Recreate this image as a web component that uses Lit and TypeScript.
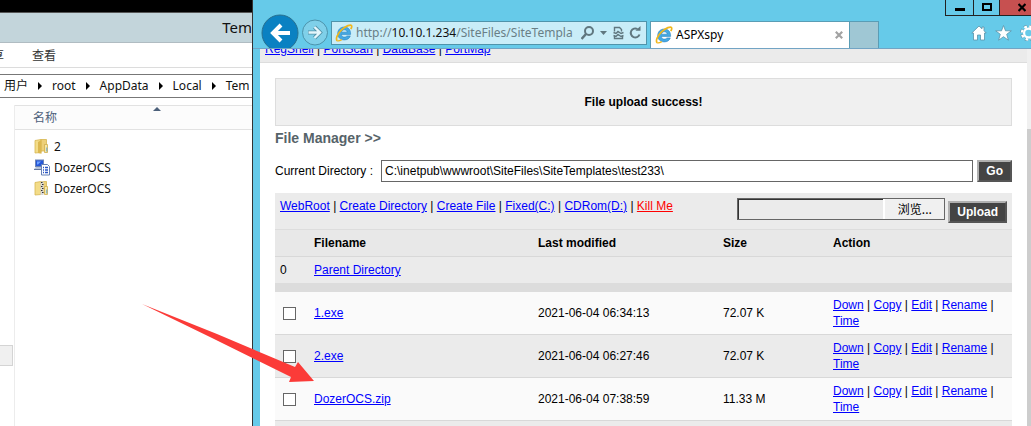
import { LitElement, html, css, svg } from "lit";
import { customElement } from "lit/decorators.js";

const ieLogo = () => html`<svg class="ie" width="18" height="18" viewBox="0 0 18 18" aria-hidden="true">
  <path d="M15.600 10.400H6.400c.2 1.700 1.300 2.700 3 2.700 1.200 0 2-.4 2.500-1.200h3.400c-.8 2.500-3 4-6 4-3.900 0-6.600-2.500-6.600-6.300C2.700 5.700 5.500 3 9.300 3c4 0 6.500 2.800 6.300 7.400zM6.500 8.200h5.700C12 6.700 11 5.800 9.400 5.800S6.800 6.700 6.500 8.200z" fill="#45a9e2" stroke="#2a83c2" stroke-width=".6"/>
  <path d="M2.300 16.700C.2 15.300 2.400 9.600 6.800 5.600 11 1.800 15.600.200 16.500 1.600c.5.900.1 2.200-.7 3.600" fill="none" stroke="#f0b71c" stroke-width="1.700"/>
  <path d="M2.300 16.700c1 .5 2.700-.1 4.500-1.100" fill="none" stroke="#f0b71c" stroke-width="1.500"/>
</svg>`;

const folderBack = svg`<path d="M1 2.500 7 1.500v13L1 15z" fill="#f3dc88" stroke="#d7b650" stroke-width=".8"/>
  <path d="M7 1.500h5.500v11.500H7z" fill="#edd079" stroke="#d7b650" stroke-width=".8"/>
  <path d="M10.500 6.500h3v8h-3z" fill="#f7e7a8" stroke="#cfae4c" stroke-width=".8"/>
  <path d="M12.800 9.500v4" stroke="#66a7cf"/>`;

const icons: Record<string, unknown> = {
  folder: html`<svg width="16" height="17" viewBox="0 0 16 17" aria-hidden="true">${folderBack}
    <path d="M4 4 7.500 2v13.800L4 15z" fill="#dcb850"/></svg>`,
  app: html`<svg width="16" height="17" viewBox="0 0 16 17" aria-hidden="true">
    <rect x="1.500" y="1" width="8" height="6.500" fill="#2556d8" stroke="#6f86b5"/>
    <path d="M3 2.500h4l-3 3H3z" fill="#6fa2ff"/>
    <path d="M2 8h7v2H0z" fill="#b7c3d8"/><path d="M0 10.500h8" stroke="#65789d"/>
    <path d="M7.500 5.500h6l2 2v8.500h-8z" fill="#fff" stroke="#6681b5"/>
    <path d="M9 8.500h1M9 11h1M9 13.500h1M11 8.500h3M11 11h3M11 13.500h3" stroke="#2a55c4" stroke-width="1.300"/></svg>`,
  zip: html`<svg width="16" height="17" viewBox="0 0 16 17" aria-hidden="true">${folderBack}
    <path d="M8 1.500v13.500" stroke="#d8d8d8" stroke-width="3"/>
    <path d="M7 2.500h1.500M8 4.500h1.500M7 6.500h1.500M8 8.500h1.500M7 10.500h1.500M8 12.500h1.500" stroke="#333"/></svg>`,
};

@customElement("explorer-window")
class ExplorerWindow extends LitElement {
  static styles = css`
    :host {
      display: flex;
      flex-direction: column;
      min-width: 0;
      overflow: hidden;
      background: #fff;
      color: #111;
      font: 12px/16px "Noto Sans", "Noto Sans CJK SC", sans-serif;
      white-space: nowrap;
    }
    .backdrop { flex: none; height: 12px; background: #000; border-bottom: 1px solid #555; }
    .title { flex: none; height: 29px; line-height: 29px; background: #c3d5db; border-bottom: 1px solid #b0bcc2; font-size: 15px; text-align: right; }
    .ribbon { flex: none; display: flex; gap: 28px; height: 24px; line-height: 26px; border-bottom: 1px solid #dcdcdc; color: #333; }
    .cut { display: flex; justify-content: flex-end; width: 4px; overflow: hidden; }
    .path { flex: none; display: flex; align-items: center; gap: 10px; height: 22px; margin-top: 6px; padding-left: 4px; border: solid #777; border-width: 1px 0; overflow: hidden; }
    .path i { flex: none; border: 4px solid transparent; border-left: 4px solid #000; border-right: 0; }
    .body { flex: 1; display: grid; grid-template-columns: 15px 1fr; min-height: 0; padding-top: 7px; }
    .tree { border-right: 1px solid #ececec; }
    .node { height: 19px; width: 12px; margin-top: 240px; background: #f0f0f0; border: 1px solid #d4d4d4; border-left: 0; }
    .head { position: relative; height: 23px; line-height: 23px; padding-left: 18px; background: #fcfcfc; border: solid #e2e2e2; border-width: 1px 0; color: #4c607a; }
    .sort { position: absolute; left: 138px; top: 1px; border: 4px solid transparent; border-bottom-color: #4c607a; border-top: 0; }
    .files { list-style: none; margin: 0; padding: 6px 0 0 19px; }
    .files li { display: flex; align-items: center; gap: 4px; height: 21px; }
  `;
  render() {
    const path = ["用户", "root", "AppData", "Local", "Tem"];
    const files = [["folder", "2"], ["app", "DozerOCS"], ["zip", "DozerOCS"]];
    return html`
      <div class="backdrop"></div>
      <div class="title">Tem</div>
      <div class="ribbon"><span class="cut">享</span><span>查看</span></div>
      <div class="path">${path.map((p, n) => html`${n ? html`<i></i>` : ""}<span>${p}</span>`)}</div>
      <div class="body">
        <div class="tree"><div class="node"></div></div>
        <div>
          <div class="head">名称<span class="sort"></span></div>
          <ul class="files">${files.map(([k, n]) => html`<li>${icons[k]}<span>${n}</span></li>`)}</ul>
        </div>
      </div>`;
  }
}

@customElement("browser-window")
class BrowserWindow extends LitElement {
  static styles = css`
    :host {
      display: flex;
      flex-direction: column;
      min-width: 0;
      overflow: hidden;
      background: #66cae9;
      border-left: 1px solid #333;
      font: 12px/16px "Liberation Sans", Arial, sans-serif;
      color: #000;
    }
    button, input { font: inherit; box-sizing: border-box; margin: 0; }
    .chrome { position: relative; flex: none; display: flex; align-items: flex-end; height: 48px; border-bottom: 1px solid #72a4c4; overflow: hidden; font-family: "Noto Sans", sans-serif; }
    .nav { display: flex; flex: none; width: 81px; padding-left: 8px; box-sizing: border-box; }
    .nav button, .tools button, .win button, .address button, .tab button { display: block; padding: 0; border: 0; background: none; }
    .nav svg, .tools svg, .address svg, .tab svg { display: block; }
    .address { flex: none; display: flex; align-items: center; width: 316px; height: 24px; margin: 0 0 3px -3px; padding: 0 4px 0 3px; box-sizing: border-box; background: #c9edf8; border: 1px solid #4f94ab; gap: 3px; }
    .url { flex: 1; min-width: 0; white-space: nowrap; font-size: 12px; line-height: 22px; color: #6a7f86; }
    .url b { font-weight: 400; color: #111; }
    .tab { flex: none; display: flex; align-items: center; gap: 3px; width: 200px; height: 27px; margin-left: 3px; padding: 0 6px 0 4px; box-sizing: border-box; background: #fff; border: 1px solid #5a9db5; border-bottom: 0; }
    .tab span { flex: 1; }
    .newtab { flex: none; width: 29px; height: 27px; padding: 0; background: #9fc7d4; border: 1px solid #5a9db5; border-left: 0; border-bottom: 0; }
    .tools { flex: none; display: flex; gap: 8px; margin: 0 -6px 7px auto; }
    .win { position: absolute; right: 0; top: 0; display: flex; height: 16px; }
    .win button { height: 16px; border: 1px solid #222; border-top: 0; border-right: 0; }
    .min { width: 28px; } .max { width: 26px; }
    .win .close { width: 32px; padding-left: 12px; background: #c75050; }
    .win svg { display: block; margin: 0 auto; }
    .view { flex: 1; display: grid; grid-template-columns: minmax(0, 1fr) 4px; min-height: 0; margin-left: 7px; background: #fff; }
    .page { overflow: hidden; }
    .scroll { background: #f0f0f0; padding-top: 80px; box-sizing: border-box; }
    .thumb { height: 100%; background: #cdcdcd; }
    .menu { display: flex; align-items: flex-end; height: 14px; padding: 0 5px 5px; box-sizing: border-box; overflow: hidden; background: #ebebeb; border-bottom: 1px solid #ddd; }
    a { color: #00f; }
    .kill { color: #f00; }
    .main { padding: 15px 15px 0; }
    .notice { padding: 15px; text-align: center; font-weight: 700; background: #f0f0f0; border: 1px solid #ddd; }
    h2 { margin: 4px 0 14px; font-size: 14px; line-height: 16px; color: #566369; }
    .dir { display: flex; align-items: center; gap: 4px; margin-bottom: 11px; }
    .dir label { margin-right: 4px; }
    .dir input { flex: 1; min-width: 0; height: 22px; padding: 0 3px; border: 1px solid #666; }
    .dark { height: 22px; padding: 0 7px; color: #fff; font-weight: 700; background: #444; border: 2px solid #666; border-color: #b0b0b0 #555 #555 #b0b0b0; }
    .bar { display: flex; justify-content: space-between; padding: 5px; height: 26px; background: #ebebeb; border-bottom: 1px solid #ddd; }
    .upload { display: flex; gap: 3px; align-items: flex-end; height: 25px; }
    .file { display: flex; height: 22px; align-self: flex-start; border: 1px solid #666; box-sizing: border-box; }
    .file input { width: 145px; min-width: 0; height: 20px; background: #ebebeb; border: solid #333; border-width: 1px 0 0 1px; }
    .file button { width: 61px; height: 20px; padding: 0; border: 0; border-left: 2px solid #fff; background: #f0f0f0; font-family: "Noto Sans CJK SC", sans-serif; line-height: 18px; }
    table { width: 100%; table-layout: fixed; border-collapse: separate; border-spacing: 0; text-align: left; }
    th, td { padding: 5px; border-bottom: 1px solid #d8d8d8; }
    .pick { width: 24px; } .date { width: 175px; } .size { width: 100px; } .act { width: 174px; }
    thead tr { background: #e8e8e8; }
    .parent { background: #ebebeb; }
    .parent td { border: 0; }
    .gap td { height: 9px; padding: 0; border: 0; background: #dcdcdc; }
    .light { background: #fafafa; }
    .shade { background: #ebebeb; }
    .shade.end td { height: 32px; }
    .tick { appearance: none; display: block; width: 13px; height: 13px; margin-left: 3px; border: 1px solid #666; background: #fff; }
  `;
  render() {
    const link = (t: string, cls = "") => html`<a class=${cls} href="#">${t}</a>`;
    const bars = (list: string[]) => list.map((t, n) => html`${n ? " | " : ""}${link(t, t === "Kill Me" ? "kill" : "")}`);
    const rows = [
      ["1.exe", "2021-06-04 06:34:13", "72.07 K"],
      ["2.exe", "2021-06-04 06:27:46", "72.07 K"],
      ["DozerOCS.zip", "2021-06-04 07:38:59", "11.33 M"],
    ];
    return html`
      <div class="chrome">
        <div class="nav">
          <button aria-label="Back"><svg width="38" height="34" viewBox="0 0 38 34"><circle cx="19" cy="19" r="18" fill="#0a81c2" stroke="#28708f"/><path d="M29 19H12M20 11l-8 8 8 8" fill="none" stroke="#fff" stroke-width="4"/></svg></button>
          <button aria-label="Forward"><svg width="30" height="34" viewBox="0 0 30 34"><circle cx="16" cy="18.500" r="12.500" fill="#7fd0e9" stroke="#4b93ab"/><path d="M9 18.500h12M15.500 13l5.500 5.500-5.500 5.500" fill="none" stroke="#5292a8" stroke-width="4"/><path d="M9.500 18.500h11M15.500 13l5.500 5.500-5.500 5.500" fill="none" stroke="#e4f6fc" stroke-width="2.400"/></svg></button>
        </div>
        <div class="address">
          ${ieLogo()}
          <div class="url">http://<b>10.10.1.234</b>/SiteFiles/SiteTempla</div>
          <button aria-label="Search"><svg width="26" height="16" viewBox="0 0 26 16"><circle cx="8" cy="6" r="4" fill="none" stroke="#60777f" stroke-width="2"/><path d="M5 9l-4.500 5" stroke="#60777f" stroke-width="2.500"/><path d="M19 6h7l-3.500 4z" fill="#60777f"/></svg></button>
          <button aria-label="Compatibility view"><svg width="16" height="16" viewBox="0 0 16 16"><path d="M4.500 6.500v-4h5l2 2v2M4.500 11v2.500h8V11M3.500 7.500 6 8.500l2-2 3 2 2.500-1M3.500 10.500 6 11.500l2-2 3 2 2.500-1" fill="none" stroke="#60777f" stroke-width="1.400"/></svg></button>
          <button aria-label="Refresh"><svg width="13" height="16" viewBox="0 0 13 16"><path d="M10.500 9.500A4.500 4.500 0 1 1 8.500 4" fill="none" stroke="#60777f" stroke-width="2"/><path d="M6.500 5.800h5V1z" fill="#60777f"/></svg></button>
        </div>
        <div class="tab">${ieLogo()}<span>ASPXspy</span><button aria-label="Close tab"><svg width="8" height="8" viewBox="0 0 8 8"><path d="M.8.8l6.400 6.400M7.200.8.8 7.200" stroke="#a2a2a2" stroke-width="2.200"/></svg></button></div>
        <button class="newtab" aria-label="New tab"></button>
        <div class="tools">
          <button aria-label="Home"><svg width="16" height="16" viewBox="0 0 16 16"><path d="M8 1 .8 8h1.700v7h4v-5h3v5h4V8h1.700L13 5.700V2h-2v1.800z" fill="#fff" stroke="#5a93a8" stroke-width=".8"/></svg></button>
          <button aria-label="Favorites"><svg width="17" height="16" viewBox="0 0 17 16"><path d="m8.500.500 2 5.300h5.800l-4.600 3.500 1.700 5.900-4.900-3.500-4.900 3.500 1.700-5.900L.7 5.800h5.800z" fill="#fff" stroke="#5a93a8" stroke-width=".8"/></svg></button>
          <button aria-label="Tools"><svg width="17" height="16" viewBox="0 0 17 16"><circle cx="8.500" cy="8" r="6.500" fill="none" stroke="#5a93a8" stroke-width="3.600" stroke-dasharray="3.100 2"/><circle cx="8.500" cy="8" r="6.500" fill="none" stroke="#fff" stroke-width="2.400" stroke-dasharray="2.700 2.400"/><circle cx="8.500" cy="8" r="4.400" fill="none" stroke="#fff" stroke-width="2.200"/></svg></button>
        </div>
        <div class="win">
          <button class="min" aria-label="Minimize"><svg width="10" height="10"><path d="M0 6.500h10" stroke="#000" stroke-width="3"/></svg></button>
          <button class="max" aria-label="Maximize"><svg width="10" height="10"><path d="M1 1h8v6H1z" fill="none" stroke="#000" stroke-width="2"/></svg></button>
          <button class="close" aria-label="Close"><svg width="8" height="10"><path d="M.5 1l7 7M7.500 1l-7 7" stroke="#000" stroke-width="2.200"/></svg></button>
        </div>
      </div>
      <div class="view">
        <div class="page">
          <nav class="menu"><span>${bars(["RegShell", "PortScan", "DataBase", "PortMap"])}</span></nav>
          <div class="main">
            <div class="notice">File upload success!</div>
            <h2>File Manager &gt;&gt;</h2>
            <div class="dir">
              <label for="cwd">Current Directory :</label>
              <input id="cwd" type="text" value="C:\\inetpub\\wwwroot\\SiteFiles\\SiteTemplates\\test233\\" />
              <button class="dark">Go</button>
            </div>
            <div class="bar">
              <span>${bars(["WebRoot", "Create Directory", "Create File", "Fixed(C:)", "CDRom(D:)", "Kill Me"])}</span>
              <div class="upload">
                <div class="file"><input type="text" readonly aria-label="File to upload" /><button>浏览...</button></div>
                <button class="dark">Upload</button>
              </div>
            </div>
            <table>
              <thead><tr><th class="pick"></th><th>Filename</th><th class="date">Last modified</th><th class="size">Size</th><th class="act">Action</th></tr></thead>
              <tbody>
                <tr class="parent"><td>0</td><td colspan="4">${link("Parent Directory")}</td></tr>
                <tr class="gap"><td colspan="5"></td></tr>
                ${rows.map(([name, date, size], n) => html`<tr class=${n % 2 ? "shade" : "light"}>
                  <td><input class="tick" type="checkbox" aria-label=${name} /></td>
                  <td>${link(name)}</td><td>${date}</td><td>${size}</td>
                  <td>${bars(["Down", "Copy", "Edit", "Rename", "Time"])}</td></tr>`)}
                <tr class="shade end"><td colspan="5"></td></tr>
              </tbody>
            </table>
          </div>
        </div>
        <div class="scroll"><div class="thumb"></div></div>
      </div>`;
  }
}

@customElement("app-root")
class AppRoot extends LitElement {
  static styles = css`
    :host { position: relative; display: grid; grid-template-columns: 252px minmax(0, 1fr); height: 100vh; overflow: hidden; }
    .arrow { position: absolute; left: 142px; top: 303px; pointer-events: none; }
  `;
  render() {
    return html`
      <explorer-window></explorer-window>
      <browser-window></browser-window>
      <svg class="arrow" width="173" height="80" viewBox="0 0 173 80" aria-hidden="true"><path d="M0 1 75 31 153 64l3-5 16 19-25 1 2-5L70 35z" fill="#fb3b38"/></svg>`;
  }
}
